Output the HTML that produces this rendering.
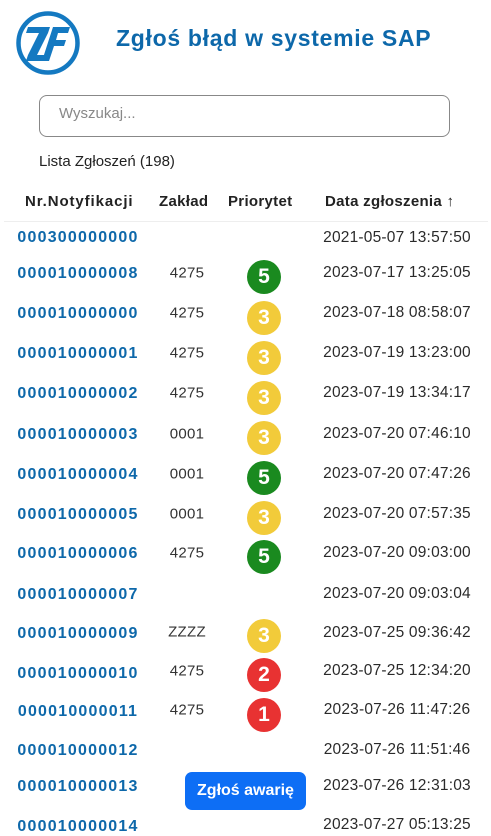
<!DOCTYPE html>
<html><head><meta charset="utf-8"><style>
body{margin:0;width:491px;height:834px;background:#fff;font-family:"Liberation Sans",sans-serif;position:relative;overflow:hidden;color:#222}
.a{position:absolute;white-space:nowrap}
.id{left:13px;width:130px;text-align:center;font-weight:bold;color:#0d68aa;font-size:16px;letter-spacing:1.2px;transform:translateY(-50%)}
.z{left:160px;width:54px;text-align:center;font-size:15px;color:#333;letter-spacing:.3px;transform:translateY(-50%)}
.d{left:316px;width:162px;text-align:center;font-size:15.5px;color:#2a2a2a;letter-spacing:.2px;transform:translateY(-50%)}
.b{left:247px;width:34px;height:34px;border-radius:50%;color:#fff;font-weight:bold;font-size:21px;text-align:center;line-height:34px;transform:translateY(-50%)}
.g{background:#1a8a1f}.y{background:#f2cb3a}.r{background:#e83232}
.h{font-weight:bold;font-size:15px;color:#222;top:193px;letter-spacing:.3px}
</style></head><body>
<svg class="a" style="left:15px;top:10px" width="66" height="66" viewBox="0 0 66 66">
<circle cx="33" cy="33" r="29.5" fill="none" stroke="#1479c1" stroke-width="4.5"/>
<path d="M13 17H35L33 23L22 45H31L29 51H11L13 45L24 23H11Z" fill="#1479c1"/>
<path d="M38 17H55L53 23H43L41 30H51L49 36H39L34 51H27Z" fill="#1479c1"/>
</svg>
<div class="a" style="left:116px;top:25px;font-size:23px;font-weight:bold;color:#0d68aa;letter-spacing:.7px">Zgłoś błąd w systemie SAP</div>
<div class="a" style="left:39px;top:95px;width:409px;height:40px;border:1.5px solid #888;border-radius:8px"></div>
<div class="a" style="left:59px;top:105px;font-size:15px;color:#888">Wyszukaj...</div>
<div class="a" style="left:39px;top:153px;font-size:15px;color:#222">Lista Zgłoszeń (198)</div>
<div class="a h" style="left:25px;letter-spacing:.9px">Nr.Notyfikacji</div>
<div class="a h" style="left:159px">Zakład</div>
<div class="a h" style="left:228px">Priorytet</div>
<div class="a h" style="left:325px">Data zgłoszenia ↑</div>
<div class="a" style="left:4px;top:221px;width:484px;height:1px;background:#eee"></div>

<div class="a id" style="top:238px">000300000000</div><div class="a d" style="top:238px">2021-05-07 13:57:50</div>
<div class="a id" style="top:274px">000010000008</div><div class="a z" style="top:273px">4275</div><div class="a b g" style="top:277px">5</div><div class="a d" style="top:273px">2023-07-17 13:25:05</div>
<div class="a id" style="top:314px">000010000000</div><div class="a z" style="top:313px">4275</div><div class="a b y" style="top:318px">3</div><div class="a d" style="top:313px">2023-07-18 08:58:07</div>
<div class="a id" style="top:354px">000010000001</div><div class="a z" style="top:353px">4275</div><div class="a b y" style="top:358px">3</div><div class="a d" style="top:353px">2023-07-19 13:23:00</div>
<div class="a id" style="top:394px">000010000002</div><div class="a z" style="top:393px">4275</div><div class="a b y" style="top:398px">3</div><div class="a d" style="top:393px">2023-07-19 13:34:17</div>
<div class="a id" style="top:435px">000010000003</div><div class="a z" style="top:434px">0001</div><div class="a b y" style="top:438px">3</div><div class="a d" style="top:434px">2023-07-20 07:46:10</div>
<div class="a id" style="top:475px">000010000004</div><div class="a z" style="top:474px">0001</div><div class="a b g" style="top:478px">5</div><div class="a d" style="top:474px">2023-07-20 07:47:26</div>
<div class="a id" style="top:515px">000010000005</div><div class="a z" style="top:514px">0001</div><div class="a b y" style="top:518px">3</div><div class="a d" style="top:514px">2023-07-20 07:57:35</div>
<div class="a id" style="top:554px">000010000006</div><div class="a z" style="top:553px">4275</div><div class="a b g" style="top:557px">5</div><div class="a d" style="top:553px">2023-07-20 09:03:00</div>
<div class="a id" style="top:595px">000010000007</div><div class="a d" style="top:594px">2023-07-20 09:03:04</div>
<div class="a id" style="top:634px">000010000009</div><div class="a z" style="top:632px">ZZZZ</div><div class="a b y" style="top:636px">3</div><div class="a d" style="top:633px">2023-07-25 09:36:42</div>
<div class="a id" style="top:674px">000010000010</div><div class="a z" style="top:671px">4275</div><div class="a b r" style="top:675px">2</div><div class="a d" style="top:671px">2023-07-25 12:34:20</div>
<div class="a id" style="top:712px">000010000011</div><div class="a z" style="top:710px">4275</div><div class="a b r" style="top:715px">1</div><div class="a d" style="top:710px">2023-07-26 11:47:26</div>
<div class="a id" style="top:751px">000010000012</div><div class="a d" style="top:750px">2023-07-26 11:51:46</div>
<div class="a id" style="top:787px">000010000013</div><div class="a d" style="top:786px">2023-07-26 12:31:03</div>
<div class="a id" style="top:827px">000010000014</div><div class="a d" style="top:825px">2023-07-27 05:13:25</div>
<div class="a" style="left:185px;top:772px;width:121px;height:38px;background:#0d6ef5;border-radius:7px;color:#fff;font-weight:bold;font-size:16px;text-align:center;line-height:38px">Zgłoś awarię</div>
</body></html>
